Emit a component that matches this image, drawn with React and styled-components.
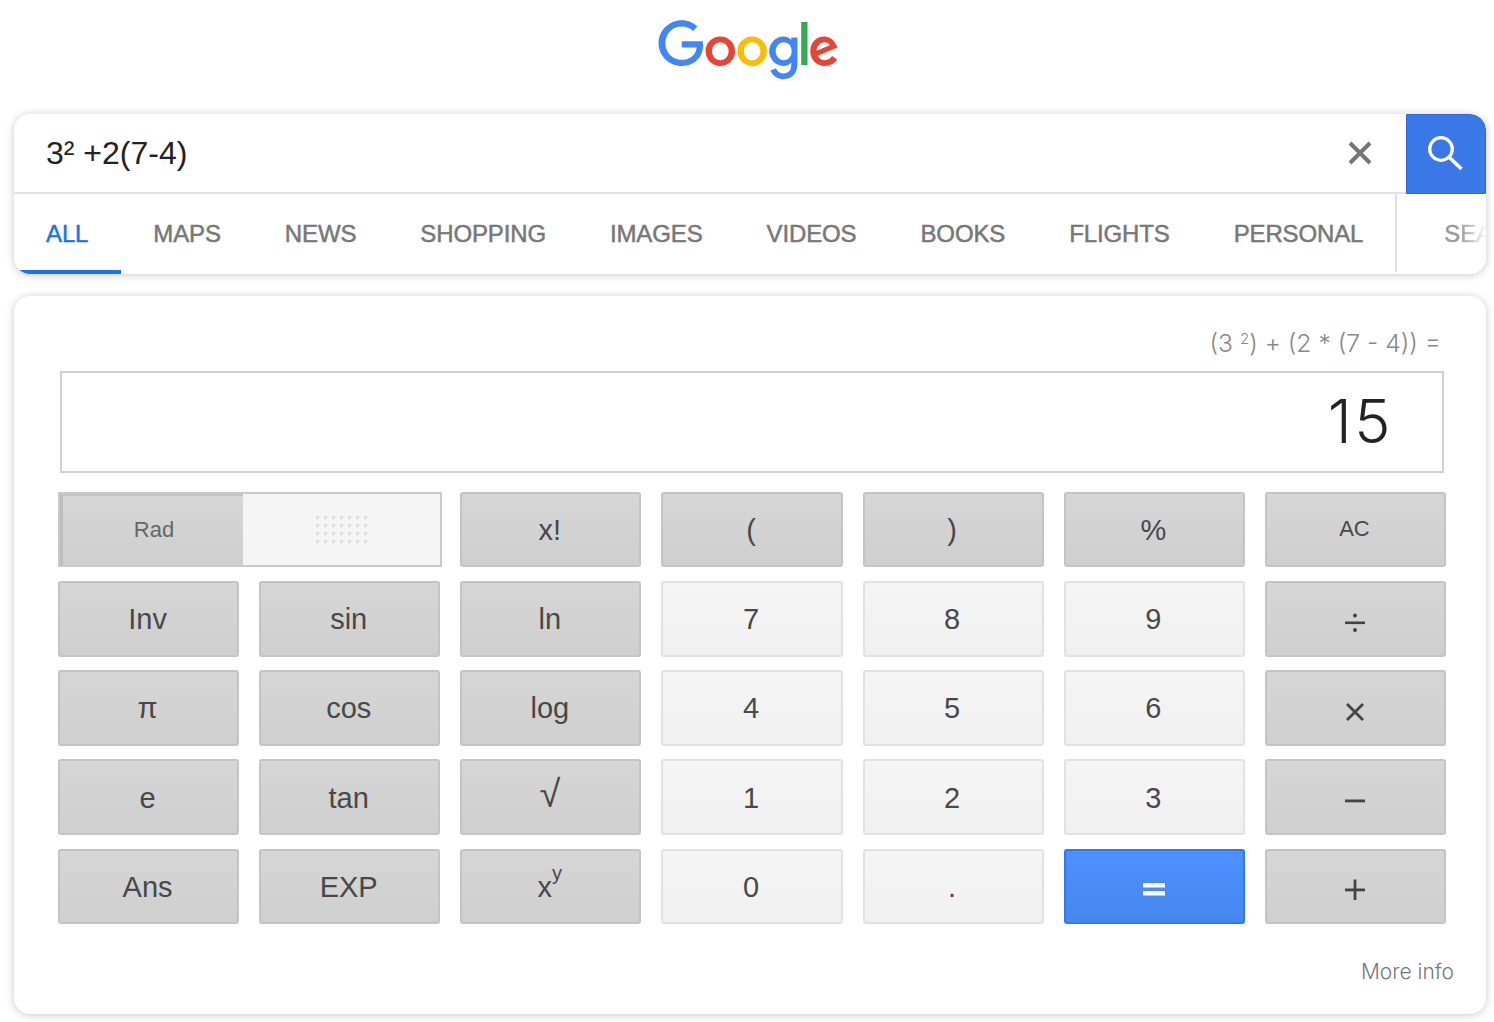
import React from 'react';
import styled, { createGlobalStyle } from 'styled-components';

const GlobalStyle = createGlobalStyle`
    html, body {
        margin: 0;
        padding: 0;
        background: #fff;
    }

    body {
        font-family: "Liberation Sans", Arial, sans-serif;
    }
`;

const Page = styled.div`
    width: 1494px;
    height: 1022px;
    overflow: hidden;
    padding: 20px 8px 0 14px;
    box-sizing: border-box;
`;

const Header = styled.header`
    display: flex;
    justify-content: center;
    height: 94px;
    padding-right: 4px;
`;

const Card = styled.section`
    width: 1472px;
    background: #fff;
    border-radius: 16px;
    box-shadow: 0 1px 8px rgba(0, 0, 0, 0.22);
    box-sizing: border-box;
`;

const SearchCard = styled(Card)`
    height: 160px;
    overflow: hidden;
`;

const SearchRow = styled.div`
    display: flex;
    align-items: stretch;
    height: 80px;
    box-sizing: border-box;
    border-bottom: 2px solid #e2e2e2;
`;

const Query = styled.div`
    flex: 1;
    padding: 20px 0 0 32px;
    font-size: 32px;
    line-height: 38px;
    color: #222;
`;

const ClearButton = styled.div`
    display: flex;
    align-items: center;
    justify-content: center;
    width: 80px;
    margin-right: 6px;
`;

const SearchButton = styled.div`
    display: flex;
    align-items: center;
    justify-content: center;
    width: 80px;
    height: 80px;
    box-sizing: border-box;
    background: #3b78e7;
    border: 1px solid #3367d6;
    border-top-right-radius: 16px;
`;

const Tabs = styled.nav`
    position: relative;
    display: flex;
    height: 80px;
    overflow: hidden;
`;

const Tab = styled.div`
    flex: none;
    padding: 0 ${(p) => (p.$active ? '33px' : '32px')} 0 32px;
    height: 80px;
    box-sizing: border-box;
    font-size: 24px;
    letter-spacing: -0.13px;
    line-height: 80px;
    -webkit-text-stroke: 0.5px currentColor;
    color: ${(p) => (p.$active ? '#1a73e8' : '#777')};
    border-bottom: 4px solid ${(p) => (p.$active ? '#1a73e8' : 'transparent')};
    white-space: nowrap;
`;

const ToolsTab = styled(Tab)`
    padding-left: 47px;
    border-left: 2px solid #e2e2e2;
    color: #999;
    -webkit-mask-image: linear-gradient(90deg, #000 64px, transparent 92px);
    mask-image: linear-gradient(90deg, #000 64px, transparent 92px);
`;

const CalcCard = styled(Card)`
    height: 718px;
    margin-top: 22px;
    padding: 30px 40px 0 44px;
`;

const Formula = styled.div`
    height: 45px;
    padding-right: 5px;
    text-align: right;
    font-family: Inter, "Liberation Sans", sans-serif;
    font-weight: 300;
    font-size: 24.7px;
    line-height: 34px;
    color: #888;

    sup {
        font-size: 15px;
        line-height: 0;
        vertical-align: 8px;
    }
`;

const Display = styled.div`
    width: 1384px;
    margin-left: 2px;
    height: 102px;
    box-sizing: border-box;
    border: 2px solid #d0d0d0;
    padding-right: 49px;
    text-align: right;
    font-family: Inter, "Liberation Sans", sans-serif;
    font-weight: 300;
    font-size: 61px;
    letter-spacing: 2.5px;
    line-height: 96px;
    color: #222;
`;

const Keypad = styled.div`
    display: grid;
    grid-template-columns: repeat(7, 1fr);
    grid-auto-rows: 75.4px;
    column-gap: 20px;
    row-gap: 13.75px;
    width: 1388px;
    margin-top: 19px;
`;

const palette = {
    dark: ['#d6d6d6', '#cfcfcf', '#c4c4c4', '#484848'],
    light: ['#f5f5f5', '#f0f0f0', '#e2e2e2', '#484848'],
    blue: ['#4d90fe', '#4787ed', '#3079ed', '#fff'],
};

const keySizes = {
    small: { font: '22px', padding: '0 0 2px' },
    normal: { font: '29px', padding: '2px 0 0' },
    large: { font: '38px', padding: '0 0 6px' },
};

const Key = styled.div`
    display: flex;
    align-items: center;
    justify-content: center;
    box-sizing: border-box;
    border: 2px solid ${(p) => palette[p.$kind][2]};
    border-radius: 3px;
    background: linear-gradient(${(p) => palette[p.$kind][0]}, ${(p) => palette[p.$kind][1]});
    color: ${(p) => palette[p.$kind][3]};
    font-size: ${(p) => keySizes[p.$size].font};
    padding: ${(p) => keySizes[p.$size].padding};
`;

const KeyLabel = styled.span`
    margin-right: 2px;

    sup {
        font-size: 20px;
        line-height: 0;
        vertical-align: 17px;
    }
`;

const UnitToggle = styled.div`
    grid-column: span 2;
    display: flex;
    margin-right: -2px;
    box-sizing: border-box;
    border: 2px solid #c9c9c9;
    background: #f5f5f5;
`;

const RadSide = styled.div`
    display: flex;
    align-items: center;
    justify-content: center;
    width: 183px;
    box-sizing: border-box;
    border-left: 3px solid #bdbdbd;
    border-top: 2px solid #c4c4c4;
    background: linear-gradient(#d6d6d6, #cfcfcf);
    color: #666;
    font-size: 22px;
    padding: 0 0 2px 2px;
`;

const DegSide = styled.div`
    flex: 1;
    display: flex;
    align-items: center;
    justify-content: center;
`;

const MoreInfo = styled.div`
    width: 1396px;
    margin-top: 33px;
    text-align: right;
    font-family: Inter, "Liberation Sans", sans-serif;
    font-weight: 300;
    font-size: 21px;
    line-height: 30px;
    color: #777;
`;

const tabs = ['ALL', 'MAPS', 'NEWS', 'SHOPPING', 'IMAGES', 'VIDEOS', 'BOOKS', 'FLIGHTS', 'PERSONAL'];

const keys = [
    [{ label: 'x!' }, { label: '(' }, { label: ')' }, { label: '%' }, { label: 'AC', size: 'small' }],
    [
        { label: 'Inv' }, { label: 'sin' }, { label: 'ln' },
        { label: '7', kind: 'light' }, { label: '8', kind: 'light' }, { label: '9', kind: 'light' },
        { icon: 'divide' },
    ],
    [
        { label: 'π' }, { label: 'cos' }, { label: 'log' },
        { label: '4', kind: 'light' }, { label: '5', kind: 'light' }, { label: '6', kind: 'light' },
        { icon: 'times' },
    ],
    [
        { label: 'e' }, { label: 'tan' }, { label: '√', size: 'large' },
        { label: '1', kind: 'light' }, { label: '2', kind: 'light' }, { label: '3', kind: 'light' },
        { icon: 'minus' },
    ],
    [
        { label: 'Ans' }, { label: 'EXP' }, { label: 'x', sup: 'y' },
        { label: '0', kind: 'light' }, { label: '.', kind: 'light' },
        { icon: 'equals', kind: 'blue' }, { icon: 'plus' },
    ],
];

function GoogleLogo() {
    return (
        <svg width="181" height="61" viewBox="0 0 272 92" aria-label="Google">
            <path fill="#EA4335" d="M115.75 47.18c0 12.77-9.99 22.18-22.25 22.18s-22.25-9.41-22.25-22.18C71.25 34.32 81.24 25 93.5 25s22.25 9.32 22.25 22.18zm-9.74 0c0-7.98-5.79-13.44-12.51-13.44S80.99 39.2 80.99 47.18c0 7.9 5.79 13.44 12.51 13.44s12.51-5.55 12.51-13.44z" />
            <path fill="#FBBC05" d="M163.75 47.18c0 12.77-9.99 22.18-22.25 22.18s-22.25-9.41-22.25-22.18c0-12.85 9.99-22.18 22.25-22.18s22.25 9.32 22.25 22.18zm-9.74 0c0-7.98-5.79-13.44-12.51-13.44s-12.51 5.46-12.51 13.44c0 7.9 5.79 13.44 12.51 13.44s12.51-5.55 12.51-13.44z" />
            <path fill="#4285F4" d="M209.75 26.34v39.82c0 16.38-9.66 23.07-21.08 23.07-10.75 0-17.22-7.19-19.66-13.07l8.48-3.53c1.51 3.61 5.21 7.87 11.17 7.87 7.31 0 11.84-4.51 11.84-13v-3.19h-.34c-2.18 2.69-6.38 5.04-11.68 5.04-11.09 0-21.25-9.66-21.25-22.09 0-12.52 10.16-22.26 21.25-22.26 5.29 0 9.49 2.35 11.68 4.96h.34v-3.61h9.25zm-8.56 20.92c0-7.81-5.21-13.52-11.84-13.52-6.72 0-12.35 5.71-12.35 13.52 0 7.73 5.63 13.36 12.35 13.36 6.63 0 11.84-5.63 11.84-13.36z" />
            <path fill="#34A853" d="M225 3v65h-9.5V3h9.5z" />
            <path fill="#EA4335" d="M262.02 54.48l7.56 5.04c-2.44 3.61-8.32 9.83-18.48 9.83-12.6 0-22.01-9.74-22.01-22.18 0-13.19 9.49-22.18 20.92-22.18 11.51 0 17.14 9.16 18.98 14.11l1.01 2.52-29.65 12.28c2.27 4.45 5.8 6.72 10.75 6.72 4.96 0 8.4-2.44 10.92-6.14zm-23.27-7.98l19.82-8.23c-1.09-2.77-4.37-4.7-8.23-4.7-4.95 0-11.84 4.37-11.59 12.93z" />
            <path fill="#4285F4" d="M35.29 41.41V32H67c.31 1.64.47 3.58.47 5.68 0 7.06-1.93 15.79-8.15 22.01-6.05 6.3-13.78 9.66-24.02 9.66C16.32 69.35.36 53.89.36 34.91.36 15.93 16.32.47 35.3.47c10.5 0 17.98 4.12 23.6 9.49l-6.64 6.64c-4.03-3.78-9.49-6.72-16.97-6.72-13.86 0-24.7 11.17-24.7 25.03 0 13.86 10.84 25.03 24.7 25.03 8.99 0 14.11-3.61 17.39-6.89 2.66-2.66 4.41-6.46 5.1-11.65l-22.49.01z" />
        </svg>
    );
}

function ClearIcon() {
    return (
        <svg width="24" height="24" viewBox="0 0 24 24">
            <path d="M2 2 L22 22 M22 2 L2 22" stroke="#757575" strokeWidth="4" fill="none" />
        </svg>
    );
}

function SearchIcon() {
    return (
        <svg width="36" height="36" viewBox="0 0 36 36" fill="none" stroke="#fff">
            <circle cx="13" cy="13" r="11.3" strokeWidth="3.2" />
            <path d="M21 21 L33.5 33" strokeWidth="3.6" />
        </svg>
    );
}

function OperatorIcon({ name }) {
    const color = name === 'equals' ? '#fff' : '#444';
    return (
        <svg width="24" height="24" viewBox="0 0 24 24" fill={color} style={{ marginTop: 6 }}>
            {name === 'divide' && (
                <>
                    <rect x="2" y="10.5" width="20" height="2.6" />
                    <circle cx="12" cy="4.5" r="2" />
                    <circle cx="12" cy="19" r="2" />
                </>
            )}
            {name === 'times' && (
                <path d="M4 4 L20 20 M20 4 L4 20" stroke={color} strokeWidth="2.8" fill="none" />
            )}
            {name === 'minus' && <rect x="2" y="10.5" width="20" height="2.8" />}
            {name === 'plus' && (
                <>
                    <rect x="2" y="10.5" width="20" height="2.8" />
                    <rect x="10.6" y="1.5" width="2.8" height="20.5" />
                </>
            )}
            {name === 'equals' && (
                <>
                    <rect x="1" y="5" width="22" height="4.5" />
                    <rect x="1" y="13" width="22" height="4.5" />
                </>
            )}
        </svg>
    );
}

function DotGrid() {
    const dots = [];
    for (let row = 0; row < 4; row++) {
        for (let col = 0; col < 7; col++) {
            dots.push(<rect key={`${row}-${col}`} x={col * 8} y={row * 8} width="3.2" height="3.2" />);
        }
    }
    return (
        <svg width="52" height="28" viewBox="0 0 52 28" fill="#dcdcdc">
            {dots}
        </svg>
    );
}

function App() {
    return (
        <Page>
            <GlobalStyle />
            <Header>
                <GoogleLogo />
            </Header>

            <SearchCard>
                <SearchRow>
                    <Query>3² +2(7-4)</Query>
                    <ClearButton>
                        <ClearIcon />
                    </ClearButton>
                    <SearchButton>
                        <SearchIcon />
                    </SearchButton>
                </SearchRow>
                <Tabs>
                    {tabs.map((tab, i) => (
                        <Tab key={tab} $active={i === 0}>{tab}</Tab>
                    ))}
                    <ToolsTab>SEARCH TOOLS</ToolsTab>
                </Tabs>
            </SearchCard>

            <CalcCard>
                <Formula>(3 <sup>2</sup>) + (2 * (7 - 4)) =</Formula>
                <Display>15</Display>
                <Keypad>
                    <UnitToggle>
                        <RadSide>Rad</RadSide>
                        <DegSide>
                            <DotGrid />
                        </DegSide>
                    </UnitToggle>
                    {keys.flat().map((key, i) => (
                        <Key key={i} $kind={key.kind || 'dark'} $size={key.size || 'normal'}>
                            {key.icon ? (
                                <OperatorIcon name={key.icon} />
                            ) : (
                                <KeyLabel>
                                    {key.label}
                                    {key.sup && <sup>{key.sup}</sup>}
                                </KeyLabel>
                            )}
                        </Key>
                    ))}
                </Keypad>
                <MoreInfo>More info</MoreInfo>
            </CalcCard>
        </Page>
    );
}

export default App;
